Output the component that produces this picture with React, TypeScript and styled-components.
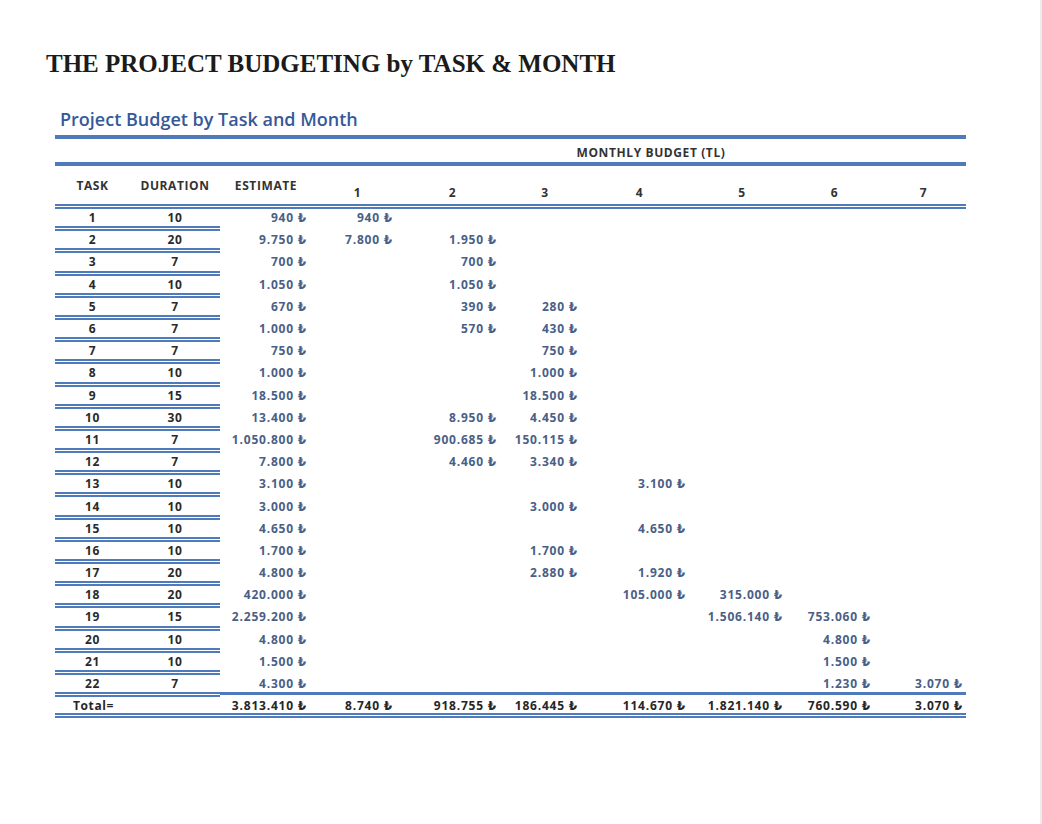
import React from "react";
import styled, { createGlobalStyle } from "styled-components";

const GlobalStyle = createGlobalStyle`
  html, body { margin: 0; padding: 0; background: #ffffff; }
  * { box-sizing: border-box; }
`;

const BLUE = "#4f7bbd";
const COLS = "75px 90px 92px 86px 104px 81px 108px 97px 88px 90px";

const Page = styled.div`
  width: 1042px;
  min-height: 824px;
  padding: 48px 0 0 0;
  background: #ffffff;
  border-right: 2px solid #ececec;
`;

const Title = styled.h1`
  margin: 0 0 0 46px;
  font-family: "Liberation Serif", "Times New Roman", serif;
  font-weight: 700;
  font-size: 25px;
  line-height: 32px;
  color: #1b1b1b;
`;

const Sheet = styled.div`
  margin: 28px 0 0 55px;
  width: 911px;
  font-family: "Open Sans", "DejaVu Sans", sans-serif;
`;

const SheetTitle = styled.h2`
  margin: 0 0 4px 5px;
  font-family: "Open Sans", sans-serif;
  font-weight: 600;
  font-size: 18px;
  line-height: 23px;
  color: #35599a;
`;

const Band = styled.div`
  border-top: 4px solid ${BLUE};
  border-bottom: 4px solid ${BLUE};
  height: 31px;
  display: grid;
  grid-template-columns: ${COLS};
  align-items: center;
`;

const BandLabel = styled.div`
  grid-column: 4 / -1;
  padding: 4px 0 0 24px;
  text-align: center;
  font-weight: 700;
  font-size: 12px;
  letter-spacing: 0.6px;
  color: #333333;
`;

const Row = styled.div<{ $h: number; $border?: boolean }>`
  display: grid;
  grid-template-columns: ${COLS};
  height: ${(p) => p.$h}px;
  ${(p) => (p.$border ? `border-bottom: 5px double ${BLUE};` : "")}
`;

const HeadCell = styled.div<{ $month?: boolean }>`
  display: flex;
  justify-content: center;
  align-items: ${(p) => (p.$month ? "flex-end" : "center")};
  padding: ${(p) => (p.$month ? "0 0 3px 5px" : "0")};
  font-weight: 700;
  font-size: 12px;
  letter-spacing: 0.6px;
  color: #333333;
`;

const KeyCell = styled.div`
  display: flex;
  align-items: center;
  justify-content: center;
  font-weight: 700;
  font-size: 12px;
  letter-spacing: 0.6px;
  color: #2a2a2a;
  border-bottom: 5px double ${BLUE};
`;

const ValueCell = styled.div<{ $last?: boolean; $pad: number; $total?: boolean }>`
  display: flex;
  align-items: center;
  justify-content: flex-end;
  padding-right: ${(p) => p.$pad}px;
  padding-bottom: ${(p) => (p.$total || p.$last ? 0 : 5)}px;
  font-weight: 700;
  font-size: 12px;
  letter-spacing: 0.8px;
  white-space: nowrap;
  color: ${(p) => (p.$total ? "#262626" : "#4a5f86")};
  ${(p) => (p.$last ? `border-bottom: 3px solid ${BLUE}; margin-bottom: 2px;` : "")}
`;

const TotalLabel = styled.div`
  grid-column: 1 / 3;
  display: flex;
  align-items: center;
  padding-left: 18px;
  font-weight: 700;
  font-size: 12px;
  letter-spacing: 0.6px;
  color: #262626;
`;

type Rec = [number, number, string, string[]];

const rows: Rec[] = [
  [1, 10, "940", ["940"]],
  [2, 20, "9.750", ["7.800", "1.950"]],
  [3, 7, "700", ["", "700"]],
  [4, 10, "1.050", ["", "1.050"]],
  [5, 7, "670", ["", "390", "280"]],
  [6, 7, "1.000", ["", "570", "430"]],
  [7, 7, "750", ["", "", "750"]],
  [8, 10, "1.000", ["", "", "1.000"]],
  [9, 15, "18.500", ["", "", "18.500"]],
  [10, 30, "13.400", ["", "8.950", "4.450"]],
  [11, 7, "1.050.800", ["", "900.685", "150.115"]],
  [12, 7, "7.800", ["", "4.460", "3.340"]],
  [13, 10, "3.100", ["", "", "", "3.100"]],
  [14, 10, "3.000", ["", "", "3.000"]],
  [15, 10, "4.650", ["", "", "", "4.650"]],
  [16, 10, "1.700", ["", "", "1.700"]],
  [17, 20, "4.800", ["", "", "2.880", "1.920"]],
  [18, 20, "420.000", ["", "", "", "105.000", "315.000"]],
  [19, 15, "2.259.200", ["", "", "", "", "1.506.140", "753.060"]],
  [20, 10, "4.800", ["", "", "", "", "", "4.800"]],
  [21, 10, "1.500", ["", "", "", "", "", "1.500"]],
  [22, 7, "4.300", ["", "", "", "", "", "1.230", "3.070"]],
];

const totals = ["3.813.410", "8.740", "918.755", "186.445", "114.670", "1.821.140", "760.590", "3.070"];
const months = [1, 2, 3, 4, 5, 6, 7];
const money = (v: string) => (v ? `${v} ₺` : "");
const padFor = (i: number) => (i === 7 ? 3 : 5);

export default function App() {
  return (
    <>
      <GlobalStyle />
      <Page>
        <Title>THE PROJECT BUDGETING by TASK &amp; MONTH</Title>
        <Sheet>
          <SheetTitle>Project Budget by Task and Month</SheetTitle>
          <Band>
            <BandLabel>MONTHLY BUDGET (TL)</BandLabel>
          </Band>
          <Row $h={43} $border>
            <HeadCell>TASK</HeadCell>
            <HeadCell>DURATION</HeadCell>
            <HeadCell>ESTIMATE</HeadCell>
            {months.map((m) => (
              <HeadCell key={m} $month>
                {m}
              </HeadCell>
            ))}
          </Row>
          {rows.map(([task, dur, est, vals], idx) => {
            const last = idx === rows.length - 1;
            const cells = [est, ...months.map((_, i) => vals[i] || "")];
            return (
              <Row key={task} $h={22.2}>
                <KeyCell>{task}</KeyCell>
                <KeyCell>{dur}</KeyCell>
                {cells.map((v, i) => (
                  <ValueCell key={i} $pad={padFor(i)} $last={last}>
                    {money(v)}
                  </ValueCell>
                ))}
              </Row>
            );
          })}
          <Row $h={21} $border>
            <TotalLabel>Total=</TotalLabel>
            {totals.map((v, i) => (
              <ValueCell key={i} $pad={padFor(i)} $total>
                {money(v)}
              </ValueCell>
            ))}
          </Row>
        </Sheet>
      </Page>
    </>
  );
}
